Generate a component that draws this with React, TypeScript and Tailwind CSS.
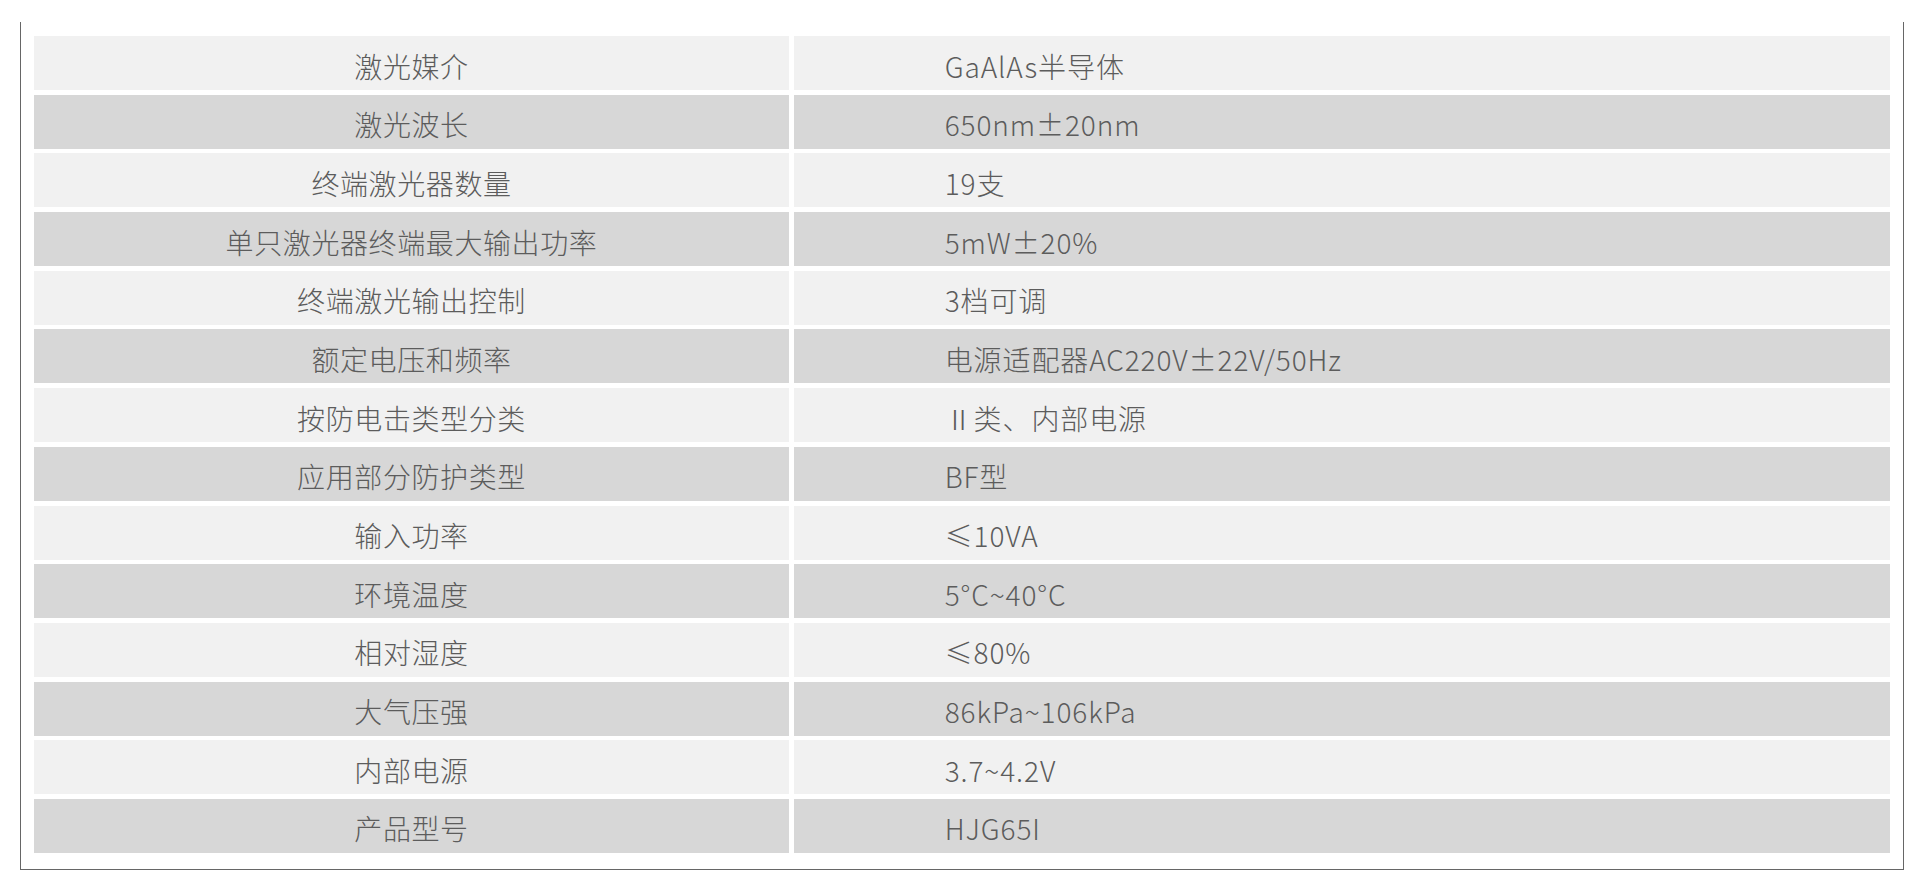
const specs: [string, string][] = [
  ["激光媒介", "GaAlAs半导体"],
  ["激光波长", "650nm±20nm"],
  ["终端激光器数量", "19支"],
  ["单只激光器终端最大输出功率", "5mW±20%"],
  ["终端激光输出控制", "3档可调"],
  ["额定电压和频率", "电源适配器AC220V±22V/50Hz"],
  ["按防电击类型分类", "Ⅱ类、内部电源"],
  ["应用部分防护类型", "BF型"],
  ["输入功率", "≤10VA"],
  ["环境温度", "5°C~40°C"],
  ["相对湿度", "≤80%"],
  ["大气压强", "86kPa~106kPa"],
  ["内部电源", "3.7~4.2V"],
  ["产品型号", "HJG65I"],
];

export default function App() {
  return (
    <div
      className="min-h-[890px] bg-white pt-[22px] pl-[20px]"
      style={{ fontFamily: '"Noto Sans CJK SC", "Noto Sans", sans-serif' }}
    >
      <div className="w-[1884px] border-x border-b border-[#666666] pt-[14px] pr-[13px] pb-[16px] pl-[13px]">
        <div className="grid grid-cols-[755px_1fr] gap-[4.7px]">
          {specs.map(([label, value], i) => {
            const bg = i % 2 === 0 ? "bg-[#f1f1f1]" : "bg-[#d7d7d7]";
            return (
              <div key={label} className="contents">
                <div
                  className={`${bg} flex h-[54px] items-center justify-center pt-[5px] text-[28px] font-light leading-none tracking-[0.6px] text-[#5c5c5c]`}
                >
                  {label}
                </div>
                <div
                  className={`${bg} flex h-[54px] items-center pl-[151px] pt-[5px] text-[28px] font-light leading-none tracking-[0.9px] text-[#5c5c5c]`}
                >
                  {value}
                </div>
              </div>
            );
          })}
        </div>
      </div>
    </div>
  );
}
